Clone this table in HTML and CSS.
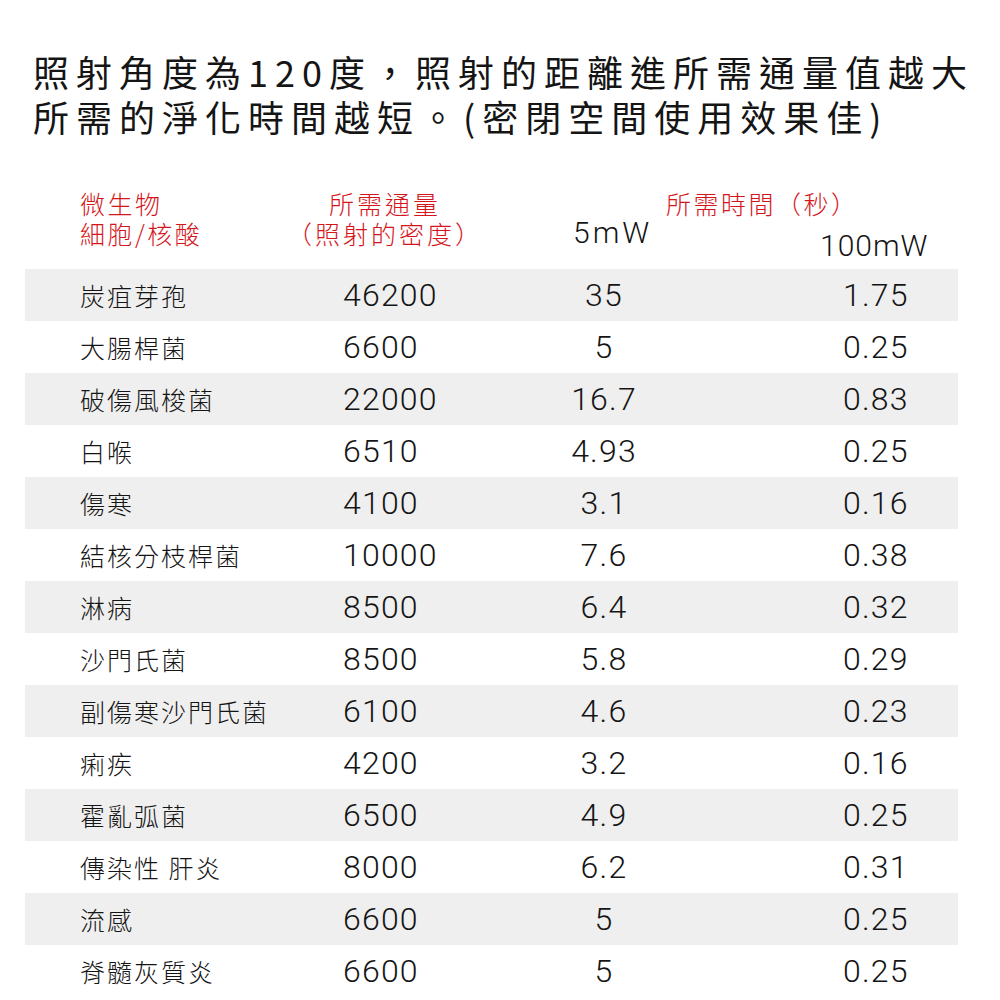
FILE: index.html
```html
<!DOCTYPE html>
<html lang="zh-Hant">
<head>
<meta charset="utf-8">
<link rel="stylesheet" href="styles.css">
</head>
<body>
<div class="page">
  <div class="title">
    <p>照射角度為120度，照射的距離進所需通量值越大</p>
    <p>所需的淨化時間越短。(密閉空間使用效果佳)</p>
  </div>
  <div class="head">
    <div class="h-name"><div>微生物</div><div>細胞/核酸</div></div>
    <div class="h-flux"><div>所需通量</div><div>（照射的密度）</div></div>
    <div class="h-time">
      <div class="h-time-title">所需時間（秒）</div>
      <div class="h-units"><span class="u5">5mW</span><span class="u100">100mW</span></div>
    </div>
  </div>
  <div class="table">
    <div class="row"><span class="c-name">炭疽芽孢</span><span class="c-flux">46200</span><span class="c-5">35</span><span class="c-100">1.75</span></div>
    <div class="row"><span class="c-name">大腸桿菌</span><span class="c-flux">6600</span><span class="c-5">5</span><span class="c-100">0.25</span></div>
    <div class="row"><span class="c-name">破傷風梭菌</span><span class="c-flux">22000</span><span class="c-5">16.7</span><span class="c-100">0.83</span></div>
    <div class="row"><span class="c-name">白喉</span><span class="c-flux">6510</span><span class="c-5">4.93</span><span class="c-100">0.25</span></div>
    <div class="row"><span class="c-name">傷寒</span><span class="c-flux">4100</span><span class="c-5">3.1</span><span class="c-100">0.16</span></div>
    <div class="row"><span class="c-name">結核分枝桿菌</span><span class="c-flux">10000</span><span class="c-5">7.6</span><span class="c-100">0.38</span></div>
    <div class="row"><span class="c-name">淋病</span><span class="c-flux">8500</span><span class="c-5">6.4</span><span class="c-100">0.32</span></div>
    <div class="row"><span class="c-name">沙門氏菌</span><span class="c-flux">8500</span><span class="c-5">5.8</span><span class="c-100">0.29</span></div>
    <div class="row"><span class="c-name">副傷寒沙門氏菌</span><span class="c-flux">6100</span><span class="c-5">4.6</span><span class="c-100">0.23</span></div>
    <div class="row"><span class="c-name">痢疾</span><span class="c-flux">4200</span><span class="c-5">3.2</span><span class="c-100">0.16</span></div>
    <div class="row"><span class="c-name">霍亂弧菌</span><span class="c-flux">6500</span><span class="c-5">4.9</span><span class="c-100">0.25</span></div>
    <div class="row"><span class="c-name">傳染性 肝炎</span><span class="c-flux">8000</span><span class="c-5">6.2</span><span class="c-100">0.31</span></div>
    <div class="row"><span class="c-name">流感</span><span class="c-flux">6600</span><span class="c-5">5</span><span class="c-100">0.25</span></div>
    <div class="row"><span class="c-name">脊髓灰質炎</span><span class="c-flux">6600</span><span class="c-5">5</span><span class="c-100">0.25</span></div>
  </div>
</div>
</body>
</html>
```
FILE: styles.css
```css
html, body {
  margin: 0;
  padding: 0;
  background: #ffffff;
}
.page {
  width: 1000px;
  height: 1000px;
  overflow: hidden;
  font-family: "Noto Sans CJK TC", "Noto Sans CJK SC", sans-serif;
  color: #151515;
}
.title {
  padding: 49px 0 0 33px;
}
.title p {
  margin: 0;
  font-size: 36px;
  line-height: 45px;
  letter-spacing: 7px;
  white-space: nowrap;
  font-weight: 400;
}
.head {
  margin-top: 49px;
  height: 81px;
  display: flex;
  align-items: flex-start;
  color: #d4161c;
  font-size: 25px;
  line-height: 30px;
  letter-spacing: 2.5px;
  font-weight: 300;
}
.h-name {
  margin-left: 80px;
  width: 205px;
}
.h-flux {
  width: 200px;
  text-align: center;
  letter-spacing: 3px;
}
.h-time {
  flex: 1;
}
.h-time-title {
  padding-left: 181px;
}
.h-units {
  display: flex;
  align-items: flex-start;
  color: #151515;
  font-family: "Roboto", "Noto Sans", sans-serif;
  font-weight: 300;
  font-size: 30px;
  line-height: 30px;
  letter-spacing: 3px;
}
.u5 {
  margin-left: 88px;
  width: 247px;
}
.u100 {
  margin-top: 13px;
  letter-spacing: 1px;
}
.table {
  margin-left: 25px;
  width: 933px;
}
.row {
  display: grid;
  grid-template-columns: 318px 200px 122px 1fr;
  align-items: center;
  height: 52px;
}
.row:nth-child(odd) {
  background: #efefef;
}
.c-name {
  padding-left: 55px;
  font-size: 25px;
  letter-spacing: 2px;
  font-weight: 300;
  white-space: nowrap;
}
.c-flux, .c-5, .c-100 {
  font-family: "Roboto", "Noto Sans", sans-serif;
  font-weight: 300;
  font-size: 32px;
  letter-spacing: 1.2px;
}
.c-5 {
  text-align: center;
}
.c-100 {
  padding-left: 178px;
}
```
